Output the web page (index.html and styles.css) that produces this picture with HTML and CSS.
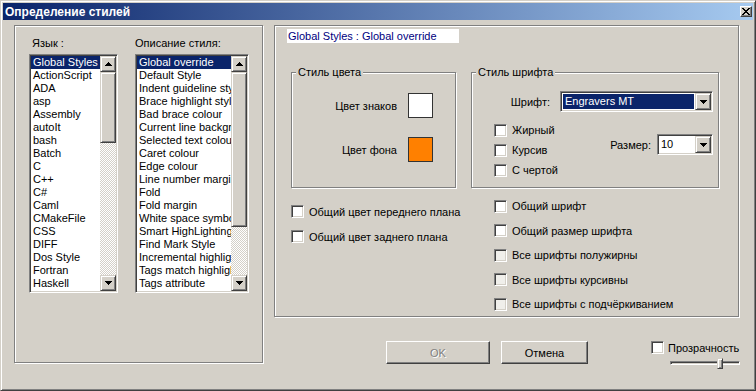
FILE: index.html
```html
<!DOCTYPE html>
<html lang="ru">
<head>
    <meta charset="UTF-8">
    <title>Определение стилей</title>
    <link rel="stylesheet" href="styles.css">
</head>
<body>
<div class="window">
    <div class="titlebar">
        <span class="title">Определение стилей</span>
        <span class="close-btn">
            <svg width="8" height="7" viewBox="0 0 8 7"><path d="M0 0h2v1h1v1h2V1h1V0h2v1H7v1H6v1H5v1h1v1h1v1h1v1H6V6H5V5H3v1H2v1H0V6h1V5h1V4h1V3H2V2H1V1H0z" fill="#000"/></svg>
        </span>
    </div>

    <div class="dialog">
        <div class="left-panel etched">
            <div class="list-col col-lang">
                <div class="list-label">Язык :</div>
                <div class="listbox">
                    <ul class="items">
                        <li class="selected">Global Styles</li>
                        <li>ActionScript</li>
                        <li>ADA</li>
                        <li>asp</li>
                        <li>Assembly</li>
                        <li>autoIt</li>
                        <li>bash</li>
                        <li>Batch</li>
                        <li>C</li>
                        <li>C++</li>
                        <li>C#</li>
                        <li>Caml</li>
                        <li>CMakeFile</li>
                        <li>CSS</li>
                        <li>DIFF</li>
                        <li>Dos Style</li>
                        <li>Fortran</li>
                        <li>Haskell</li>
                    </ul>
                    <div class="vscroll">
                        <div class="raised sb-btn"><svg width="7" height="4"><path d="M3 0h1v1h1v1h1v1h1v1H0V3h1V2h1V1h1z"/></svg></div>
                        <div class="sb-track"><div class="raised sb-thumb thumb-lang"></div></div>
                        <div class="raised sb-btn"><svg width="7" height="4"><path d="M0 0h7v1H6v1H5v1H4v1H3V3H2V2H1V1H0z"/></svg></div>
                    </div>
                </div>
            </div>
            <div class="list-col col-style">
                <div class="list-label">Описание стиля:</div>
                <div class="listbox">
                    <ul class="items">
                        <li class="selected">Global override</li>
                        <li>Default Style</li>
                        <li>Indent guideline style</li>
                        <li>Brace highlight style</li>
                        <li>Bad brace colour</li>
                        <li>Current line background colour</li>
                        <li>Selected text colour</li>
                        <li>Caret colour</li>
                        <li>Edge colour</li>
                        <li>Line number margin</li>
                        <li>Fold</li>
                        <li>Fold margin</li>
                        <li>White space symbol</li>
                        <li>Smart HighLighting</li>
                        <li>Find Mark Style</li>
                        <li>Incremental highlight all</li>
                        <li>Tags match highlighting</li>
                        <li>Tags attribute</li>
                    </ul>
                    <div class="vscroll">
                        <div class="raised sb-btn"><svg width="7" height="4"><path d="M3 0h1v1h1v1h1v1h1v1H0V3h1V2h1V1h1z"/></svg></div>
                        <div class="sb-track"><div class="raised sb-thumb thumb-style"></div></div>
                        <div class="raised sb-btn"><svg width="7" height="4"><path d="M0 0h7v1H6v1H5v1H4v1H3V3H2V2H1V1H0z"/></svg></div>
                    </div>
                </div>
            </div>
        </div>

        <div class="right-side">
            <div class="right-panel etched">
                <div class="style-name">Global Styles : Global override</div>

                <div class="groups">
                    <div class="group group-color etched">
                        <div class="group-title">Стиль цвета</div>
                        <div class="color-row row-fg"><span>Цвет знаков</span><span class="swatch swatch-white"></span></div>
                        <div class="color-row row-bg"><span>Цвет фона</span><span class="swatch swatch-orange"></span></div>
                    </div>

                    <div class="group group-font etched">
                        <div class="group-title">Стиль шрифта</div>
                        <div class="font-row">
                            <span>Шрифт:</span>
                            <div class="combo combo-font">
                                <span class="combo-text selected-text">Engravers MT</span>
                                <span class="raised combo-btn"><svg width="7" height="4"><path d="M0 0h7v1H6v1H5v1H4v1H3V3H2V2H1V1H0z"/></svg></span>
                            </div>
                        </div>
                        <div class="font-bottom">
                            <div class="font-checks">
                                <div class="check"><span class="box"></span>Жирный</div>
                                <div class="check"><span class="box"></span>Курсив</div>
                                <div class="check"><span class="box"></span>С чертой</div>
                            </div>
                            <div class="size-row">
                                <span>Размер:</span>
                                <div class="combo combo-size">
                                    <span class="combo-text">10</span>
                                    <span class="raised combo-btn"><svg width="7" height="4"><path d="M0 0h7v1H6v1H5v1H4v1H3V3H2V2H1V1H0z"/></svg></span>
                                </div>
                            </div>
                        </div>
                    </div>
                </div>

                <div class="options">
                    <div class="opt-left">
                        <div class="check opt-row"><span class="box"></span>Общий цвет переднего плана</div>
                        <div class="check opt-row"><span class="box"></span>Общий цвет заднего плана</div>
                    </div>
                    <div class="opt-right">
                        <div class="check opt-row"><span class="box"></span>Общий шрифт</div>
                        <div class="check opt-row"><span class="box"></span>Общий размер шрифта</div>
                        <div class="check opt-row"><span class="box box-dim"></span>Все шрифты полужирны</div>
                        <div class="check opt-row"><span class="box box-dim"></span>Все шрифты курсивны</div>
                        <div class="check opt-row"><span class="box box-dim"></span>Все шрифты с подчёркиванием</div>
                    </div>
                </div>
            </div>

            <div class="footer">
                <button class="btn btn-ok" disabled>OK</button>
                <button class="btn btn-cancel">Отмена</button>
                <div class="transparency">
                    <div class="check check-small"><span class="box"></span>Прозрачность</div>
                    <div class="slider">
                        <div class="slider-track"></div>
                        <div class="raised slider-thumb"></div>
                    </div>
                </div>
            </div>
        </div>
    </div>
</div>
</body>
</html>
```

FILE: styles.css
```css
* {
    margin: 0;
    padding: 0;
    box-sizing: border-box;
}
body {
    background: #d4d0c8;
    font-family: "Liberation Sans", Arial, sans-serif;
    font-size: 11px;
    color: #000;
    width: 756px;
    height: 391px;
    overflow: hidden;
}
.window {
    width: 756px;
    height: 391px;
    border: 1px solid;
    border-color: #d4d0c8 #404040 #404040 #d4d0c8;
    box-shadow: inset 1px 1px #fff, inset -1px -1px #808080;
    padding: 2px;
}
.titlebar {
    height: 17px;
    background: linear-gradient(to right, #0a246a, #a6caf0);
    display: flex;
    align-items: center;
    justify-content: space-between;
    padding: 0 1px 0 2px;
}
.title {
    color: #fff;
    font-weight: bold;
    font-size: 12px;
}
.close-btn {
    width: 12px;
    height: 11px;
    display: flex;
    align-items: center;
    justify-content: center;
    background: #d4d0c8;
    border: 1px solid;
    border-color: #fff #404040 #404040 #fff;
    box-shadow: inset -1px -1px #808080;
}

/* 3d helpers */
.raised {
    background: #d4d0c8;
    border: 1px solid;
    border-color: #d4d0c8 #404040 #404040 #d4d0c8;
    box-shadow: inset 1px 1px #fff, inset -1px -1px #808080;
}
.etched {
    border: 1px solid #808080;
    box-shadow: inset 1px 1px #fff, 1px 1px #fff;
}

.dialog {
    display: flex;
    padding: 5px 0 0 11px;
}

/* left panel with lists */
.left-panel {
    width: 249px;
    height: 338px;
    display: flex;
    gap: 17px;
    padding: 11px 0 0 14px;
}
.list-col {
    display: flex;
    flex-direction: column;
}
.list-label {
    height: 13px;
    line-height: 13px;
    margin-bottom: 4px;
}
.col-lang .list-label {
    padding-left: 3px;
}
.listbox {
    display: flex;
    height: 239px;
    background: #fff;
    border: 1px solid;
    border-color: #808080 #fff #fff #808080;
    box-shadow: inset 1px 1px #404040, inset -1px -1px #d4d0c8;
    padding: 1px;
}
.col-lang .listbox {
    width: 89px;
}
.col-style .listbox {
    width: 114px;
}
.items {
    list-style: none;
    flex: 1;
    overflow: hidden;
}
.items li {
    height: 13px;
    line-height: 13px;
    padding-left: 2px;
    white-space: nowrap;
}
.items li.selected {
    background: #0a246a;
    color: #fff;
}
.vscroll {
    width: 16px;
    display: flex;
    flex-direction: column;
}
.sb-btn {
    height: 16px;
    display: flex;
    align-items: center;
    justify-content: center;
}
.sb-track {
    flex: 1;
    background: repeating-conic-gradient(#d4d0c8 0 25%, #fff 0 50%) 0 0 / 2px 2px;
}
.thumb-lang {
    height: 71px;
}
.thumb-style {
    height: 155px;
}

/* right side */
.right-side {
    margin-left: 11px;
    display: flex;
    flex-direction: column;
}
.right-panel {
    width: 465px;
    height: 292px;
    padding: 3px 0 0 12px;
}
.style-name {
    width: 172px;
    height: 14px;
    line-height: 14px;
    background: #fff;
    color: #000080;
    padding-left: 1px;
}
.groups {
    display: flex;
    margin: 29px 0 0 4px;
}
.group {
    height: 116px;
}
.group-color {
    width: 165px;
}
.group-font {
    width: 248px;
    margin-left: 15px;
}
.group-title {
    width: fit-content;
    height: 13px;
    line-height: 13px;
    margin: -7px 0 0 4px;
    padding: 0 2px;
    background: #d4d0c8;
}
.color-row {
    display: flex;
    align-items: center;
    justify-content: flex-end;
    gap: 11px;
    height: 25px;
    padding-right: 22px;
}
.row-fg {
    margin-top: 14px;
}
.row-bg {
    margin-top: 19px;
}
.swatch {
    width: 25px;
    height: 25px;
    border: 1px solid #333;
}
.swatch-white {
    background: #fff;
}
.swatch-orange {
    background: #ff8000;
}

.font-row {
    display: flex;
    align-items: center;
    justify-content: flex-end;
    gap: 10px;
    margin-top: 12px;
    padding-right: 5px;
}
.combo {
    display: flex;
    height: 21px;
    background: #fff;
    border: 1px solid;
    border-color: #808080 #fff #fff #808080;
    box-shadow: inset 1px 1px #404040, inset -1px -1px #d4d0c8;
    padding: 1px;
}
.combo-font {
    width: 153px;
}
.combo-size {
    width: 56px;
}
.combo-text {
    flex: 1;
    line-height: 17px;
    padding-left: 2px;
    white-space: nowrap;
    overflow: hidden;
}
.combo-font .combo-text {
    margin: 1px 1px 1px 1px;
    line-height: 15px;
}
.selected-text {
    background: #0a246a;
    color: #fff;
}
.combo-btn {
    width: 16px;
    height: 17px;
    display: flex;
    align-items: center;
    justify-content: center;
}
.font-bottom {
    display: flex;
    margin-top: 8px;
}
.font-checks {
    padding-left: 22px;
}
.size-row {
    display: flex;
    align-items: center;
    gap: 6px;
    margin: 14px 0 0 auto;
    padding-right: 5px;
    height: 21px;
}

/* checkboxes */
.check {
    display: flex;
    align-items: center;
    gap: 5px;
    height: 20px;
    white-space: nowrap;
}
.box {
    width: 13px;
    height: 13px;
    background: #fff;
    border: 1px solid;
    border-color: #808080 #fff #fff #808080;
    box-shadow: inset 1px 1px #404040, inset -1px -1px #d4d0c8;
}
.box-dim {
    background: #f0efeb;
}

.options {
    display: flex;
    margin: 6px 0 0 4px;
}
.opt-left {
    width: 203px;
    padding-top: 5px;
}
.opt-left .opt-row {
    height: 25px;
}
.opt-right .opt-row {
    height: 24.5px;
}

/* footer */
.footer {
    display: flex;
    margin-top: 24px;
    padding-left: 112px;
}
.btn {
    height: 23px;
    font-family: "Liberation Sans", Arial, sans-serif;
    font-size: 11px;
    background: #d4d0c8;
    border: 1px solid;
    border-color: #fff #404040 #404040 #fff;
    box-shadow: inset -1px -1px #808080;
}
.btn-ok {
    width: 104px;
    color: #808080;
    text-shadow: 1px 1px #fff;
}
.btn-cancel {
    width: 87px;
    margin-left: 11px;
    color: #000;
}
.transparency {
    margin-left: 63px;
}
.check-small {
    height: 13px;
    gap: 4px;
}
.slider {
    position: relative;
    width: 70px;
    height: 13px;
    margin: 3px 0 0 19px;
}
.slider-track {
    position: relative;
    top: 4px;
    height: 4px;
    border: 1px solid;
    border-color: #808080 #fff #fff #808080;
    box-shadow: inset 1px 1px #404040;
    background: #d4d0c8;
}
.slider-thumb {
    position: absolute;
    left: 47px;
    top: 1px;
    width: 6px;
    height: 11px;
}
```
